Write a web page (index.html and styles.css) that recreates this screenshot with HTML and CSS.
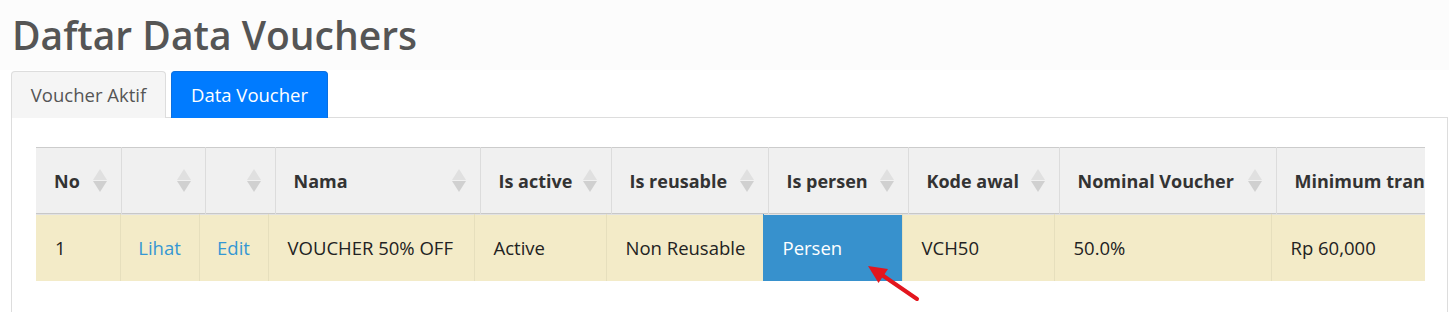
FILE: index.html
```html
<!DOCTYPE html>
<html lang="id">
<head>
  <meta charset="UTF-8">
  <meta name="viewport" content="width=device-width, initial-scale=1.0">
  <title>Daftar Data Vouchers</title>
  <link rel="stylesheet" href="styles.css">
</head>
<body>
  <section class="content-header">
    <h1>Daftar Data Vouchers</h1>
  </section>

  <ul class="nav-tabs">
    <li class="tab">Voucher Aktif</li>
    <li class="tab active">Data Voucher</li>
  </ul>

  <div class="tab-panel">
    <div class="dt-scroll">
      <!-- header dan body terpisah (scrollX datatables) -->
      <div class="dt-scroll-head">
        <table class="dt-table dt-head">
          <colgroup>
            <col style="width:85px"><col style="width:84px"><col style="width:70px"><col style="width:205px"><col style="width:131px">
            <col style="width:157px"><col style="width:140px"><col style="width:151px"><col style="width:217px"><col style="width:230px">
          </colgroup>
          <thead>
            <tr>
              <th><div class="th-inner"><span>No</span><i class="sort"></i></div></th>
              <th><div class="th-inner"><span></span><i class="sort"></i></div></th>
              <th><div class="th-inner"><span></span><i class="sort"></i></div></th>
              <th><div class="th-inner"><span>Nama</span><i class="sort"></i></div></th>
              <th><div class="th-inner"><span>Is active</span><i class="sort"></i></div></th>
              <th><div class="th-inner"><span>Is reusable</span><i class="sort"></i></div></th>
              <th><div class="th-inner"><span>Is persen</span><i class="sort"></i></div></th>
              <th><div class="th-inner"><span>Kode awal</span><i class="sort"></i></div></th>
              <th><div class="th-inner"><span>Nominal Voucher</span><i class="sort"></i></div></th>
              <th><div class="th-inner"><span>Minimum transaksi</span><i class="sort"></i></div></th>
            </tr>
          </thead>
        </table>
      </div>
      <div class="dt-scroll-body">
        <table class="dt-table dt-body">
          <colgroup>
            <col style="width:84px"><col style="width:79px"><col style="width:69px"><col style="width:206px"><col style="width:132px">
            <col style="width:157px"><col style="width:139px"><col style="width:152px"><col style="width:217px"><col style="width:230px">
          </colgroup>
          <tbody>
            <tr>
              <td>1</td>
              <td class="center"><a href="#">Lihat</a></td>
              <td class="center"><a href="#">Edit</a></td>
              <td>VOUCHER 50% OFF</td>
              <td>Active</td>
              <td>Non Reusable</td>
              <td class="selected">Persen</td>
              <td>VCH50</td>
              <td>50.0%</td>
              <td>Rp 60,000</td>
            </tr>
          </tbody>
        </table>
      </div>
    </div>

    <svg class="arrow" width="75" height="50" viewBox="0 0 75 50">
      <line x1="31" y1="19" x2="66" y2="43" stroke="#e3161e" stroke-width="4" stroke-linecap="round"/>
      <polygon points="17,10 27.5,27 37,13" fill="#e3161e"/>
    </svg>
  </div>
</body>
</html>
```

FILE: styles.css
```css
* {
  box-sizing: border-box;
  margin: 0;
  padding: 0;
}

body {
  font-family: 'Open Sans', 'Noto Sans', sans-serif;
  background: #fff;
  color: #222;
}

.content-header {
  background: #fcfcfc;
  height: 70px;
  padding: 10px 0 0 12px;
}

.content-header h1 {
  font-size: 39px;
  font-weight: 600;
  color: #555;
  line-height: 50px;
}

.nav-tabs {
  list-style: none;
  display: flex;
  gap: 5px;
  margin: 1px 0 0 11px;
  position: relative;
  z-index: 1;
}

.tab {
  width: 155px;
  height: 47px;
  line-height: 46px;
  text-align: center;
  font-size: 18.5px;
  color: #555;
  background: #f5f5f5;
  border: 1px solid #ddd;
  border-bottom: none;
  border-radius: 4px 4px 0 0;
}

.tab.active {
  width: 157px;
  background: #007bff;
  border-color: #0a6fe0;
  color: #fff;
}

.tab-panel {
  position: relative;
  margin: -1px 1px 0 11px;
  border: 1px solid #ddd;
  border-bottom: none;
  padding: 29px 22px 40px 24px;
}

.dt-scroll {
  overflow: hidden;
}

.dt-table {
  border-collapse: collapse;
  table-layout: fixed;
}

.dt-head {
  width: 1470px;
  border-top: 1px solid #ccc;
  border-bottom: 1px solid #c8c8c8;
}

.dt-head th {
  height: 66px;
  background: #f0f0f0;
  border-left: 1px solid #dcdcdc;
  padding: 0 14px 0 18px;
  text-align: left;
  font-size: 18px;
  font-weight: 700;
  color: #333;
  white-space: nowrap;
  overflow: hidden;
}

.dt-head th:first-child {
  border-left: none;
}

.th-inner {
  display: flex;
  align-items: center;
  justify-content: space-between;
  gap: 8px;
}

.sort {
  display: flex;
  flex-direction: column;
  gap: 1px;
}

.sort::before,
.sort::after {
  content: "";
  width: 0;
  height: 0;
  border-left: 7px solid transparent;
  border-right: 7px solid transparent;
}

.sort::before {
  border-bottom: 11px solid #e0e0e0;
}

.sort::after {
  border-top: 11px solid #d0d0d0;
}

.dt-body {
  width: 1465px;
  border-top: 1px solid #e2e2e2;
}

.dt-body td {
  height: 66px;
  background: #f3ebc8;
  border-left: 1px solid #e6dfbd;
  padding: 0 10px 0 19px;
  font-size: 18.5px;
  color: #222;
  white-space: nowrap;
}

.dt-body td:first-child {
  border-left: none;
}

.dt-body td.center {
  text-align: center;
  padding: 0;
}

.dt-body td.selected {
  background: #3791cd;
  color: #fff;
  border-left-color: #3791cd;
}

.dt-body a {
  color: #3597d3;
  text-decoration: none;
}

.arrow {
  position: absolute;
  left: 839px;
  top: 138px;
}
```
